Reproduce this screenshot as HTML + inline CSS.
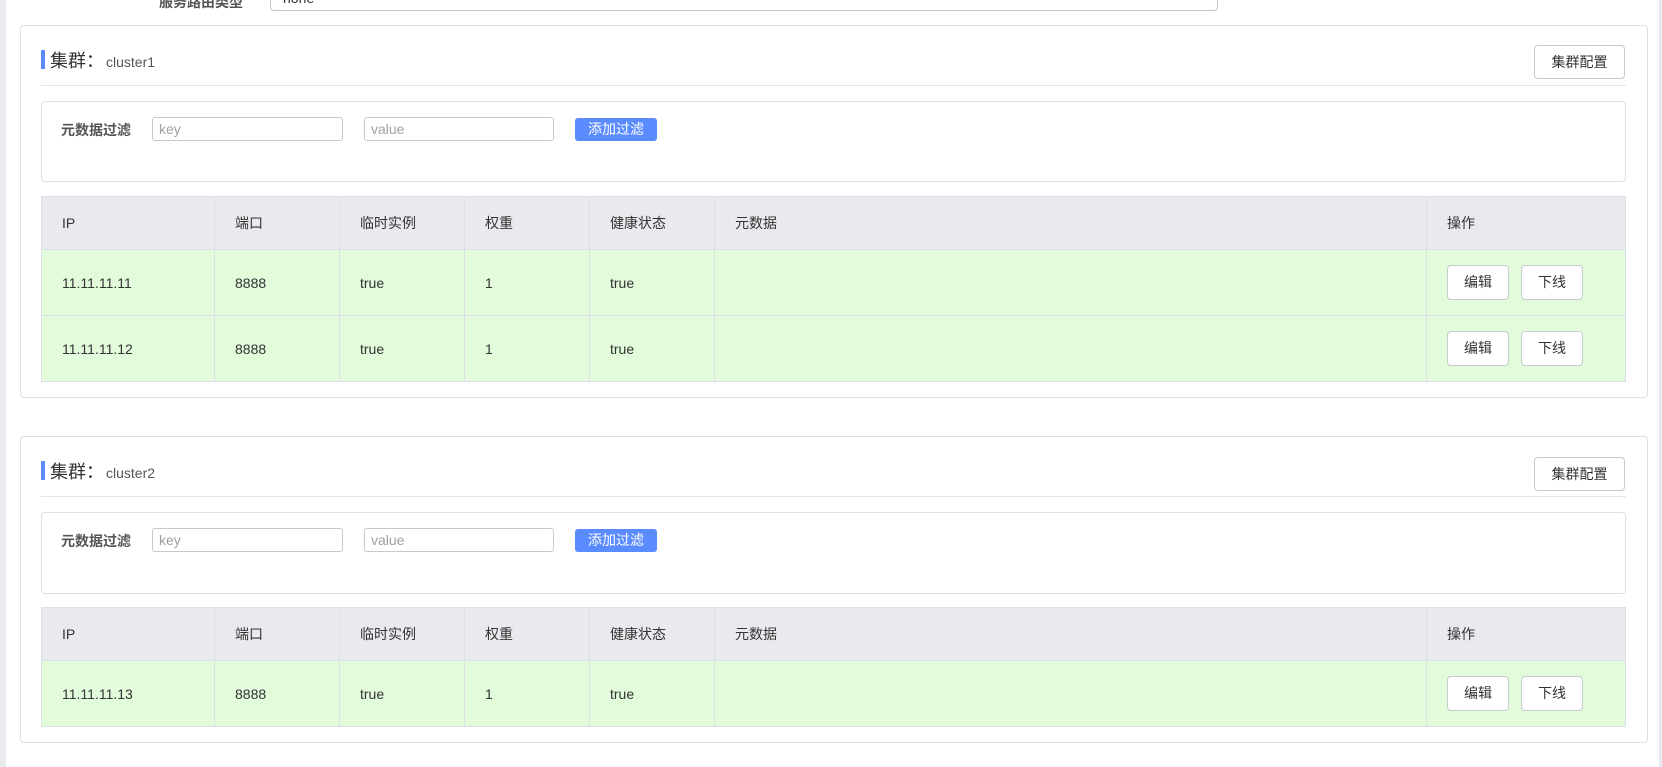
<!DOCTYPE html>
<html><head><meta charset="utf-8"><style>
*{box-sizing:border-box;margin:0;padding:0}
body{width:1662px;height:767px;background:#fff;position:relative;overflow:hidden;font-family:"Liberation Sans","Noto Sans CJK SC",sans-serif;color:#333;font-size:14px}
.abs{position:absolute}
.strip{left:0;top:0;width:6px;height:767px;background:#e9ebef}
.strip2{left:1659px;top:0;width:3px;height:767px;background:#e9ebef}
.panel{left:20px;width:1628px;border:1px solid #dcdfe6;border-radius:4px;background:#fff}
.bar{width:4px;height:19px;background:#5a8bff}
.title{font-size:18px;color:#333;white-space:nowrap}
.title small{font-size:14px;color:#555;margin-left:2px}
.btn{border:1px solid #c8cad0;border-radius:4px;background:#fff;text-align:center;font-size:14px;color:#333}
.hr{height:1px;background:#e4e6eb}
.fbox{border:1px solid #dcdfe6;border-radius:4px}
.inp{border:1px solid #c6c8ce;border-radius:3px;height:24px;color:#a0a0a0;font-size:14px;line-height:22px;padding-left:6px}
.add{background:#5a8bff;color:#fff;border-radius:3px;text-align:center;line-height:23px;height:23px;font-size:14px}
table{border-collapse:collapse;position:absolute;left:41px;width:1585px;table-layout:fixed}
td{border:1px solid #dcdfe6;padding-left:20px;font-size:14px;color:#333}
tr.h td{background:#e9eaee;height:53px}
tr.r td{background:#e2fbdb;height:66px}
.ob{display:inline-block;width:62px;height:35px;line-height:33px;margin-right:12px}
</style></head><body>
<div class="abs strip"></div><div class="abs strip2"></div>
<div class="abs" style="left:159px;top:-8px;font-size:14px;color:#555;font-weight:bold">服务路由类型</div>
<div class="abs" style="left:270px;top:-4px;width:948px;height:15px;border:1px solid #c6c8ce;border-top:none;border-radius:0 0 4px 4px;font-size:14px;padding-left:12px;line-height:4px;overflow:hidden">none</div>

<!-- panel 1 -->
<div class="abs panel" style="top:25px;height:373px"></div>
<div class="abs bar" style="left:41px;top:50px"></div>
<div class="abs title" style="left:50px;top:47px">集群：<small>cluster1</small></div>
<div class="abs btn" style="left:1534px;top:45px;width:91px;height:34px;line-height:32px">集群配置</div>
<div class="abs hr" style="left:41px;top:85px;width:1585px"></div>
<div class="abs fbox" style="left:41px;top:101px;width:1585px;height:81px"></div>
<div class="abs" style="left:61px;top:120px;font-weight:bold;color:#555">元数据过滤</div>
<div class="abs inp" style="left:152px;top:117px;width:191px">key</div>
<div class="abs inp" style="left:364px;top:117px;width:190px">value</div>
<div class="abs add" style="left:575px;top:118px;width:82px">添加过滤</div>
<table style="top:196px"><colgroup><col style="width:173px"><col style="width:125px"><col style="width:125px"><col style="width:125px"><col style="width:125px"><col style="width:712px"><col></colgroup>
<tr class="h"><td>IP</td><td>端口</td><td>临时实例</td><td>权重</td><td>健康状态</td><td>元数据</td><td>操作</td></tr>
<tr class="r"><td>11.11.11.11</td><td>8888</td><td>true</td><td>1</td><td>true</td><td></td><td><span class="btn ob">编辑</span><span class="btn ob">下线</span></td></tr>
<tr class="r"><td>11.11.11.12</td><td>8888</td><td>true</td><td>1</td><td>true</td><td></td><td><span class="btn ob">编辑</span><span class="btn ob">下线</span></td></tr>
</table>

<!-- panel 2 -->
<div class="abs panel" style="top:436px;height:307px"></div>
<div class="abs bar" style="left:41px;top:461px"></div>
<div class="abs title" style="left:50px;top:458px">集群：<small>cluster2</small></div>
<div class="abs btn" style="left:1534px;top:457px;width:91px;height:34px;line-height:32px">集群配置</div>
<div class="abs hr" style="left:41px;top:496px;width:1585px"></div>
<div class="abs fbox" style="left:41px;top:512px;width:1585px;height:82px"></div>
<div class="abs" style="left:61px;top:531px;font-weight:bold;color:#555">元数据过滤</div>
<div class="abs inp" style="left:152px;top:528px;width:191px">key</div>
<div class="abs inp" style="left:364px;top:528px;width:190px">value</div>
<div class="abs add" style="left:575px;top:529px;width:82px">添加过滤</div>
<table style="top:607px"><colgroup><col style="width:173px"><col style="width:125px"><col style="width:125px"><col style="width:125px"><col style="width:125px"><col style="width:712px"><col></colgroup>
<tr class="h"><td>IP</td><td>端口</td><td>临时实例</td><td>权重</td><td>健康状态</td><td>元数据</td><td>操作</td></tr>
<tr class="r"><td>11.11.11.13</td><td>8888</td><td>true</td><td>1</td><td>true</td><td></td><td><span class="btn ob">编辑</span><span class="btn ob">下线</span></td></tr>
</table>
</body></html>
